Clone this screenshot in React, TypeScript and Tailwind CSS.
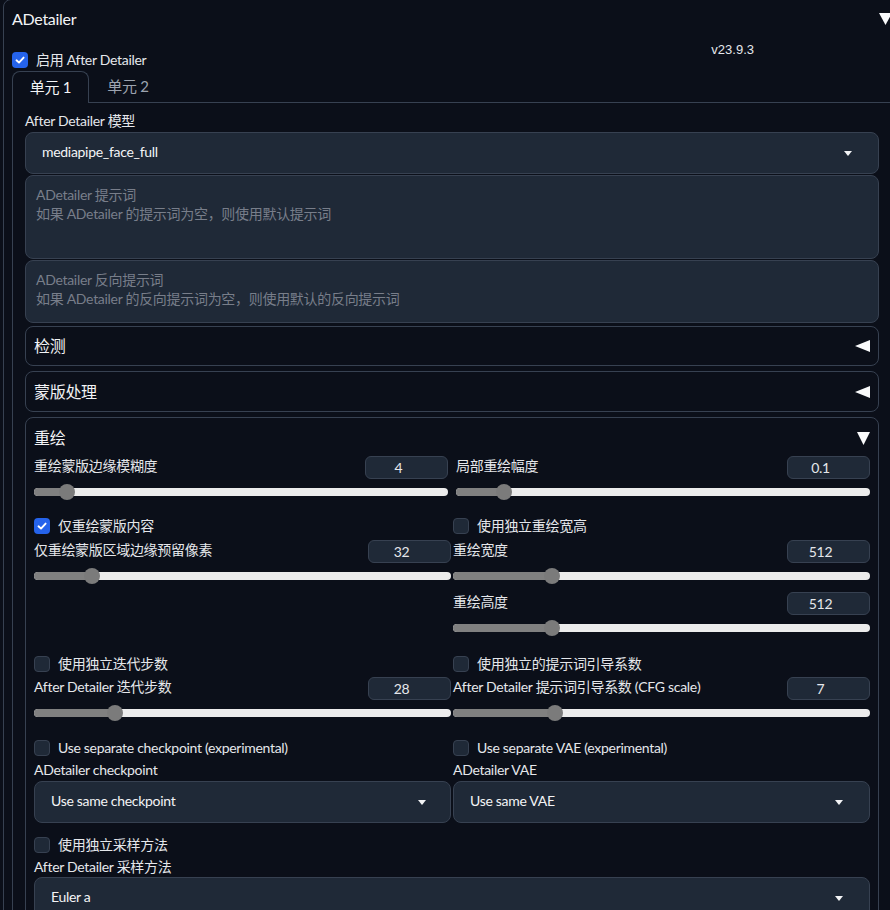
import React from "react";

function Caret() {
  return (
    <svg width="8" height="5" viewBox="0 0 8 5" className="shrink-0">
      <polygon points="0,0 8,0 4,5" fill="#f3f4f6" />
    </svg>
  );
}

function DownTri({ w = 13, h = 13 }: { w?: number; h?: number }) {
  return (
    <svg width={w} height={h} viewBox={`0 0 ${w} ${h}`} className="shrink-0">
      <polygon points={`0,0 ${w},0 ${w / 2},${h}`} fill="#f9fafb" />
    </svg>
  );
}

function LeftTri() {
  return (
    <svg width="15" height="12" viewBox="0 0 15 12" className="shrink-0">
      <polygon points="15,0 15,12 0,6" fill="#f9fafb" />
    </svg>
  );
}

function Check({ checked = false, label }: { checked?: boolean; label: string }) {
  return (
    <div className="flex items-center h-[20px] gap-[8px]">
      {checked ? (
        <span className="w-[16px] h-[16px] rounded-[4px] bg-[#2563eb] flex items-center justify-center shrink-0">
          <svg width="12" height="12" viewBox="0 0 12 12">
            <path d="M2.5 6.3 L5 8.6 L9.6 3.6" stroke="white" strokeWidth="1.9" fill="none" strokeLinecap="round" strokeLinejoin="round" />
          </svg>
        </span>
      ) : (
        <span className="w-[16px] h-[16px] rounded-[4px] bg-[#1f2937] border border-[#374151] shrink-0" />
      )}
      <span className="text-[14px] leading-[20px] text-[#e5e7eb] whitespace-nowrap">{label}</span>
    </div>
  );
}

function Slider({ label, value, frac }: { label: string; value: string; frac: number }) {
  return (
    <div>
      <div className="flex justify-between h-[23px]">
        <span className="text-[14px] leading-[20px] text-[#e5e7eb] whitespace-nowrap">{label}</span>
        <div className="w-[83px] h-[23px] rounded-[6px] border border-[#374151] bg-[#1f2937] flex items-center justify-center pr-[16px] text-[14px] text-[#e5e7eb] shrink-0">
          {value}
        </div>
      </div>
      <div className="relative mt-[5px] h-[16px]">
        <div className="absolute left-0 right-0 top-[4px] h-[8px] rounded-full bg-[#ececec] overflow-hidden">
          <div className="h-full bg-[#808080]" style={{ width: `calc(${frac} * (100% - 16px) + 8px)` }} />
        </div>
        <div
          className="absolute top-0 w-[16px] h-[16px] rounded-full bg-[#7b7b7b]"
          style={{ left: `calc(${frac} * (100% - 16px))` }}
        />
      </div>
    </div>
  );
}

function Dropdown({ text, pr = "pr-[26px]" }: { text: string; pr?: string }) {
  return (
    <div className={`h-[42px] rounded-[8px] border border-[#374151] bg-[#1f2937] flex items-center justify-between pl-[16px] ${pr}`}>
      <span className="text-[14px] leading-[20px] -mt-[3px] text-[#f3f4f6] whitespace-nowrap">{text}</span>
      <Caret />
    </div>
  );
}

function ClosedAccordion({ title, h }: { title: string; h: string }) {
  return (
    <div className={`${h} rounded-[8px] border border-[#374151] flex items-center justify-between px-[8px]`}>
      <span className="text-[16px] text-[#f3f4f6]">{title}</span>
      <LeftTri />
    </div>
  );
}

export default function App() {
  return (
    <div className="w-[890px] h-[910px] overflow-hidden bg-[#0b0f19] font-[Lato,'Noto_Sans_CJK_SC',sans-serif] tracking-[-0.3px] text-[#e5e7eb]">
      <div className="ml-[3px] -mt-px w-[898px] border border-[#374151] rounded-[8px] px-[8px] pt-[9px]">
        {/* header */}
        <div className="flex items-center justify-between h-[20px]">
          <span className="text-[16px] leading-[20px] text-[#f3f4f6]">ADetailer</span>
          <DownTri w={13} h={12} />
        </div>
        {/* enable row */}
        <div className="mt-[14px] flex items-start justify-between">
          <div className="mt-[7px]">
            <Check checked label="启用 After Detailer" />
          </div>
          <span className="mr-[138px] text-[13px] leading-[14px] tracking-normal text-[#e5e7eb] font-['Liberation_Sans',Arial,sans-serif]">
            v23.9.3
          </span>
        </div>
        {/* tabs */}
        <div className="mt-[1px] flex h-[32px]">
          <div className="w-[77px] h-full border-t border-l border-r border-[#374151] rounded-t-[8px] flex items-center justify-center text-[15px] text-[#f3f4f6]">
            单元 1
          </div>
          <div className="flex-1 h-full border-b border-[#374151] flex">
            <div className="w-[78px] h-full flex items-center justify-center text-[15px] text-[#9ca3af]">单元 2</div>
          </div>
        </div>
        {/* panel */}
        <div className="border-l border-r border-[#374151] px-[12px] pt-[8px] pb-[20px]">
          <div className="text-[14px] leading-[20px] text-[#e5e7eb]">After Detailer 模型</div>
          <div className="mt-[1px]">
            <Dropdown text="mediapipe_face_full" />
          </div>
          <div className="mt-[1px] h-[84px] rounded-[8px] border border-[#374151] bg-[#1f2937] pl-[10px] pt-[9px] text-[14px] leading-[19px] text-[#787e8a]">
            <div>ADetailer 提示词</div>
            <div>如果 ADetailer 的提示词为空，则使用默认提示词</div>
          </div>
          <div className="mt-[1px] h-[63px] rounded-[8px] border border-[#374151] bg-[#1f2937] pl-[10px] pt-[9px] text-[14px] leading-[19px] text-[#787e8a]">
            <div>ADetailer 反向提示词</div>
            <div>如果 ADetailer 的反向提示词为空，则使用默认的反向提示词</div>
          </div>
          <div className="mt-[3px]">
            <ClosedAccordion title="检测" h="h-[40px]" />
          </div>
          <div className="mt-[5px]">
            <ClosedAccordion title="蒙版处理" h="h-[41px]" />
          </div>
          {/* 重绘 */}
          <div className="mt-[5px] rounded-[8px] border border-[#374151] px-[8px] pt-[8px] pb-[20px]">
            <div className="flex items-center justify-between h-[24px]">
              <span className="text-[16px] text-[#f3f4f6]">重绘</span>
              <DownTri w={13} h={13} />
            </div>
            <div className="mt-[6px] grid grid-cols-2 gap-[8px]">
              <Slider label="重绘蒙版边缘模糊度" value="4" frac={4 / 64} />
              <Slider label="局部重绘幅度" value="0.1" frac={0.1} />
            </div>
            <div className="mt-[16px] grid grid-cols-2 gap-[2px]">
              <div>
                <Check checked label="仅重绘蒙版内容" />
                <div className="mt-[4px]">
                  <Slider label="仅重绘蒙版区域边缘预留像素" value="32" frac={32 / 256} />
                </div>
              </div>
              <div>
                <Check label="使用独立重绘宽高" />
                <div className="mt-[4px]">
                  <Slider label="重绘宽度" value="512" frac={(512 - 64) / (2048 - 64)} />
                </div>
                <div className="mt-[8px]">
                  <Slider label="重绘高度" value="512" frac={(512 - 64) / (2048 - 64)} />
                </div>
              </div>
            </div>
            <div className="mt-[18px] grid grid-cols-2 gap-[2px]">
              <div>
                <Check label="使用独立迭代步数" />
                <div className="mt-[3px]">
                  <Slider label="After Detailer 迭代步数" value="28" frac={27 / 149} />
                </div>
              </div>
              <div>
                <Check label="使用独立的提示词引导系数" />
                <div className="mt-[3px]">
                  <Slider label="After Detailer 提示词引导系数 (CFG scale)" value="7" frac={7 / 30} />
                </div>
              </div>
            </div>
            <div className="mt-[17px] grid grid-cols-2 gap-[2px]">
              <div>
                <Check label="Use separate checkpoint (experimental)" />
                <div className="mt-[2px] text-[14px] leading-[20px] text-[#e5e7eb]">ADetailer checkpoint</div>
                <div className="mt-[1px]">
                  <Dropdown text="Use same checkpoint" pr="pr-[24px]" />
                </div>
              </div>
              <div>
                <Check label="Use separate VAE (experimental)" />
                <div className="mt-[2px] text-[14px] leading-[20px] text-[#e5e7eb]">ADetailer VAE</div>
                <div className="mt-[1px]">
                  <Dropdown text="Use same VAE" />
                </div>
              </div>
            </div>
            <div className="mt-[12px]">
              <Check label="使用独立采样方法" />
              <div className="mt-[2px] text-[14px] leading-[20px] text-[#e5e7eb]">After Detailer 采样方法</div>
              <Dropdown text="Euler a" />
            </div>
          </div>
        </div>
      </div>
    </div>
  );
}
